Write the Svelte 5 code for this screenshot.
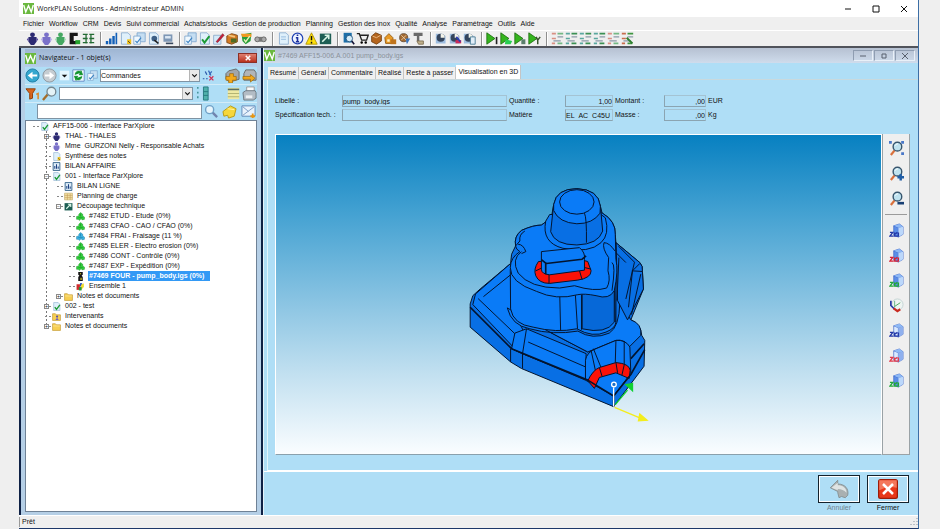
<script>
    const menus = [
        'Fichier', 'Workflow', 'CRM', 'Devis', 'Suivi commercial', 'Achats/stocks',
        'Gestion de production', 'Planning', 'Gestion des inox', 'Qualité', 'Analyse',
        'Paramétrage', 'Outils', 'Aide',
    ];

    const toolGroups = [
        ['people', 'person', 'personGreen', 'machine', 'grid'],
        ['chart', 'docYellow', 'docs', 'docDark', 'screen'],
        ['docs', 'docCheck', 'pencil', 'boxes', 'shield', 'binoculars'],
        ['doc', 'info', 'warning', 'exportTool'],
        ['search', 'cart', 'ball', 'house', 'gear', 'stamp'],
        ['clock', 'clockRed', 'clockDoc'],
        ['play', 'playLeaf', 'playDown', 'playY'],
        ['listA', 'listB', 'listB', 'listB', 'listA', 'listC'],
    ];

    const tabs = ['Résumé', 'Général', 'Commentaire', 'Réalisé', 'Reste à passer', 'Visualisation en 3D'];
    let activeTab = $state('Visualisation en 3D');
    let selected = $state('#7469 FOUR - pump_body.igs (0%)');

    const tree = [
        {
            label: 'AFF15-006 - Interface ParXplore',
            icon: 'docCheck',
            children: [
                { label: 'THAL - THALES', icon: 'people', box: '+' },
                { label: 'Mme  GURZONI Nelly - Responsable Achats', icon: 'person' },
                { label: 'Synthèse des notes', icon: 'docYellow' },
                { label: 'BILAN AFFAIRE', icon: 'report' },
                {
                    label: '001 - Interface ParXplore',
                    icon: 'docCheck',
                    box: '-',
                    children: [
                        { label: 'BILAN LIGNE', icon: 'report' },
                        { label: 'Planning de charge', icon: 'calendar' },
                        {
                            label: 'Découpage technique',
                            icon: 'exportTool',
                            box: '-',
                            children: [
                                { label: '#7482 ETUD - Etude (0%)', icon: 'opGreen' },
                                { label: '#7483 CFAO - CAO / CFAO (0%)', icon: 'opGreen' },
                                { label: '#7484 FRAI - Fraisage (11 %)', icon: 'opBlue' },
                                { label: '#7485 ELER - Electro erosion (0%)', icon: 'opGreen' },
                                { label: '#7486 CONT - Contrôle (0%)', icon: 'opGreen' },
                                { label: '#7487 EXP - Expédition (0%)', icon: 'opGreen' },
                                { label: '#7469 FOUR - pump_body.igs (0%)', icon: 'part' },
                                { label: 'Ensemble 1', icon: 'assembly' },
                            ],
                        },
                        { label: 'Notes et documents', icon: 'folder', box: '+' },
                    ],
                },
                { label: '002 - test', icon: 'docCheck', box: '+' },
                { label: 'Intervenants', icon: 'folderUser' },
                { label: 'Notes et documents', icon: 'folder', box: '+' },
            ],
        },
    ];

    const viewTools = [
        ['zoomFit', 'Ajuster'],
        ['zoomIn', 'Zoom avant'],
        ['zoomOut', 'Zoom arrière'],
        ['cubeBlue', 'Vue de dessus'],
        ['cubeRed', 'Vue de face'],
        ['cubeGreen', 'Vue de droite'],
        ['axes', 'Isométrique'],
        ['cubeBlueOpen', 'Vue de dessous'],
        ['cubeRedOpen', 'Vue arrière'],
        ['cubeGreen', 'Vue de gauche'],
    ];

    // small helpers shared by several icons
    const figure = (c, d) =>
        `<circle cx="8" cy="3.5" r="3" fill="${c}"/><path d="M3 6h10v6l-3 4H6l-3-4z" fill="${c}"/><path d="M1 9l2-2v5zM15 9l-2-2v5z" fill="${d}"/>`;
    const sheet = '<path d="M3 1h8l3 3v11H3z" fill="#dff0fb" stroke="#86a9cc"/>';
    const cube = (c, open) =>
        `<path d="M5 3l6-2 4 3v8l-5 3-5-2z" fill="${open ? '#d9e9ff' : '#5b8ee8'}" stroke="#3b62c4" stroke-width=".7"/><path d="M5 3l5 2v10M10 5l5-1" fill="none" stroke="#3b62c4" stroke-width=".8"/><path d="M5 3l6-2 4 3-5 1z" fill="#8db8f5"/><path d="M10 5l5-1v8l-5 3z" fill="${open ? '#8fb0ee' : '#bcd8fb'}"/><path d="M1 10h3l-3 4h4M6 10v4h3M9 10l-3 2M8 14h2v-4" fill="none" stroke="${c}" stroke-width="1.5"/>`;
    const lens = '<path d="M2 15l4-5" stroke="#d9703c" stroke-width="2.4"/><circle cx="9" cy="6" r="4.6" fill="#bfe2ef" stroke="#38566e" stroke-width="1.5"/><path d="M6.500 5a3 3 0 0 1 3-2" stroke="#fff" fill="none"/>';
    const dial = '<path d="M1 2h8l4 3v9H1z" fill="#9dbde0"/><circle cx="7" cy="7" r="5" fill="#34445c"/><path d="M7 7V2a5 5 0 0 1 5 5z" fill="#f4f4ea"/>';
    const arrow = '<path d="M1 1l10 7-10 7z" fill="#35b51e" stroke="#1c6d10"/>';
    const rows = (a, b) =>
        `<path d="M1 2h5M1 8h5M1 14h4" stroke="${a}" stroke-width="2"/><path d="M8 2h7M8 14h6" stroke="${b}" stroke-width="2"/><path d="M8 6h7M3 11h9" stroke="#8c9aa8" stroke-width="1.500"/>`;
    const leaf = (c, d) =>
        `<path d="M1 13V8l4-1V4l3-3 4 3v3l3 2v4l-4 1-2-2-3 3-2-2z" fill="${c}" stroke="${d}" stroke-width=".8"/><path d="M8 3v5M4 10h8" stroke="${d}"/>`;

    const icons = {
        logo: '<rect width="16" height="16" fill="#6ab83e"/><path d="M1 3l3 10 4-9 4 9 3-10" fill="none" stroke="#fff" stroke-width="2"/>',
        people: figure('#2c2a72', '#55449c'),
        person: figure('#7a71c9', '#b9b1ec'),
        personGreen: figure('#44a862', '#a5dcb5'),
        machine: '<path d="M2 1h10v4H7v6h3v4H2z" fill="#151515"/><path d="M9 10h6v5H9z" fill="#27a32e"/>',
        grid: '<path d="M1 3h6M9 3h6M1 8h6M9 8h6M1 13h6M9 13h6M5 2v12M11 2v12" stroke="#236b33" stroke-width="1.6"/>',
        chart: '<path d="M1 15v-4h3v4zM5 15V8h3v7zM9 15V5h3v10zM13 15V1h2v14z" fill="#1460b8"/>',
        doc: sheet + '<path d="M5 6h6M5 9h6" stroke="#8ab3da"/>',
        docYellow: sheet + '<path d="M10 9h5v6h-5z" fill="#f2c21a"/><path d="M11 11l3 3" stroke="#333"/>',
        docs: '<path d="M5 1h10v11H5z" fill="#c5def2" stroke="#7ba4cc"/><path d="M1 5h8v10H1z" fill="#eff8fe" stroke="#7ba4cc"/><path d="M3 11l2 2 5-6" stroke="#3d83c4" fill="none" stroke-width="1.500"/>',
        docDark: sheet + '<circle cx="9" cy="8" r="3.5" fill="#3d5f86"/><path d="M9 10l5 4" stroke="#222" stroke-width="2"/>',
        screen: '<path d="M3 3h11v9H3z" fill="#7e97b5"/><path d="M5 5h7v3H5z" fill="#dce8f4"/><path d="M6 13h9v2H6z" fill="#38495f"/>',
        docCheck: sheet + '<path d="M5 9l3 4 6-8" fill="none" stroke="#1b9a35" stroke-width="2.4"/>',
        pencil: '<path d="M2 4h9v11H2z" fill="#d5e9f8" stroke="#88a9c9"/><path d="M5 12l8-10 2 2-8 9z" fill="#c51f3a" stroke="#6d1220" stroke-width=".6"/>',
        boxes: '<path d="M1 5l6-3 7 2v8l-7 3-6-2z" fill="#d47b23" stroke="#76400e"/><path d="M6 8h7v5H6z" fill="#4f6b24"/><path d="M3 4l8 2" stroke="#f3c67d" stroke-width="2"/>',
        shield: '<path d="M2 3l12-2-1 10-6 4-4-4z" fill="#279c38"/><path d="M1 2h13v4H3z" fill="#f09a22"/><path d="M5 9l2 3 5-7" stroke="#e7f4b8" fill="none" stroke-width="1.600"/>',
        binoculars: '<circle cx="4" cy="9" r="3" fill="#aaa" stroke="#555"/><circle cx="12" cy="9" r="3" fill="#aaa" stroke="#555"/><path d="M6 6h4v6H6z" fill="#777"/>',
        info: '<circle cx="8" cy="8" r="6.500" fill="#eef4ff" stroke="#2444b4" stroke-width="1.500"/><path d="M8 3v2M6 7h2v5M6 12h4" stroke="#1c2f9c" stroke-width="2" fill="none"/>',
        warning: '<path d="M8 1l7 14H1z" fill="#ffe009" stroke="#a98d00"/><path d="M8 5v5M8 12v2" stroke="#111" stroke-width="1.800"/>',
        exportTool: '<path d="M1 2h14v13H1z" fill="#1d5e54"/><path d="M4 12l8-8M7 4h5v5" stroke="#d9f5e6" fill="none" stroke-width="2"/>',
        search: '<path d="M2 1h10v12H2z" fill="#1d6fa8"/><circle cx="9" cy="8" r="4" fill="#d4ecf8" stroke="#164a77"/><path d="M12 11l3 4" stroke="#113" stroke-width="2"/>',
        cart: '<path d="M1 2h3l3 8h6l2-6H5" fill="none" stroke="#222" stroke-width="1.700"/><circle cx="7" cy="13" r="1.500"/><circle cx="12" cy="13" r="1.500"/>',
        ball: '<path d="M2 5l5-4 7 3v7l-6 4-6-3z" fill="#b5651d" stroke="#6c3a0c"/><path d="M3 5l5 2 5-3" stroke="#f1c691" fill="none"/>',
        house: '<path d="M1 7l5-5 5 5v7H2z" fill="#e89a26" stroke="#8c5207"/><path d="M8 9h7v6H8z" fill="#bf741c"/><path d="M4 9h3v3H4z" fill="#fff0c8"/>',
        gear: '<circle cx="7" cy="7" r="5" fill="#a66b31" stroke="#5b4530"/><path d="M9 8l6 0-4 7z" fill="#3a75bd"/><path d="M4 4l6 6M10 4l-6 6" stroke="#e9d3b3"/>',
        stamp: '<path d="M2 1h11v4H9v6H6V5H2z" fill="#6b6b6b"/><path d="M6 11h8v4H8z" fill="#c0b08c" stroke="#77694a"/>',
        clock: dial,
        clockRed: dial + '<path d="M8 10h7v4H8z" fill="#c82a5a"/><path d="M9 6l5 6" stroke="#2b3bb5" stroke-width="2"/>',
        clockDoc: dial + '<path d="M9 6h6v9H9z" fill="#e1edf7" stroke="#39708b"/>',
        play: arrow + '<path d="M13 6v9" stroke="#222" stroke-width="2"/>',
        playLeaf: arrow + '<path d="M7 9l8 2-2 4H6z" fill="#29ce52"/>',
        playDown: arrow + '<path d="M9 9h5v6H9z" fill="#5b7f6c"/>',
        playY: arrow + '<path d="M10 6l2 4 3-4M12 10v5" stroke="#38532c" stroke-width="1.800" fill="none"/>',
        listA: rows('#d99083', '#74b985'),
        listB: rows('#5aa8a0', '#3c9154'),
        listC: rows('#c96d4e', '#3f9640') + '<path d="M7 7l7 7" stroke="#2f7f2f" stroke-width="2.500"/>',
        back: '<circle cx="8" cy="8" r="7" fill="#35a7cf" stroke="#1f7da3"/><path d="M13 7H8V4L3 8l5 4V9h5z" fill="#fff"/>',
        forward: '<circle cx="8" cy="8" r="7" fill="#c6cdd2" stroke="#8e989f"/><path d="M3 7h5V4l5 4-5 4V9H3z" fill="#fff"/>',
        caret: '<path d="M1 1h14v14H1z" fill="#e4f5fd"/><path d="M4 7h8l-4 4z" fill="#111"/>',
        refresh: '<path d="M1 1h14v14H1z" fill="#eef8ff" stroke="#5a7fc0"/><path d="M4 7a4 4 0 0 1 7-3V2l2 5H9l1-2M12 9a4 4 0 0 1-7 3v2L3 9h4l-1 2" fill="#11932b" stroke="#11932b"/>',
        sort: '<path d="M1 12h2M5 12h2M4 3l2 4" stroke="#2c58a8" stroke-width="1.500"/><path d="M8 2l3 6M12 3l-3 4" stroke="#3465b9" stroke-width="1.500"/><path d="M9 9l5 5M14 9l-5 5" stroke="#cf3156" stroke-width="1.600"/>',
        case: '<path d="M4 3l8-2 3 3v8l-10 3-4-3V6z" fill="#a1a6ab" stroke="#666"/><path d="M1 9h4V6h4v3h3v4H8v3H4v-3H1z" fill="#f2a91b" stroke="#9c6505" stroke-width=".7"/>',
        caseBack: '<path d="M4 2h9l2 3v8H2V6z" fill="#b1b5b8" stroke="#666"/><path d="M1 9h8V7l5 4-5 4v-3H1z" fill="#f2a91b" stroke="#9c6505" stroke-width=".7"/>',
        funnel: '<path d="M1 3h10L8 8v5l-3 1V8z" fill="#d8651e" stroke="#8e3d08"/><path d="M12 9l2-1v6" stroke="#e08724" stroke-width="1.600" fill="none"/>',
        find: '<path d="M1 15l5-6" stroke="#a46d2a" stroke-width="2.500"/><circle cx="10" cy="6" r="4.700" fill="#e4f3f7" stroke="#748790" stroke-width="1.400"/>',
        bars: '<path d="M3 1v14" stroke="#3c8d92" stroke-width="1.500" stroke-dasharray="2 3"/><path d="M9 1h5v14H9z" fill="#4fb2ac" stroke="#267a80"/><path d="M9 6h5M9 10h5" stroke="#267a80"/>',
        list: '<path d="M1 1h14v14H1z" fill="#eee9a2"/><path d="M1 3h14" stroke="#596e62" stroke-width="2"/><path d="M1 8h14M1 12h14" stroke="#a6a767"/>',
        printer: '<path d="M5 1h8v6H5z" fill="#fafafa" stroke="#999"/><path d="M1 7l3-2h10l1 2v6l-3 2H2z" fill="#b3bcc5" stroke="#6d7781"/><path d="M4 10h7v3H4z" fill="#edf0f3"/>',
        eye: '<path d="M9 9l5 5" stroke="#7184ae" stroke-width="2.500"/><circle cx="6" cy="6" r="4.300" fill="#e7f5fc" stroke="#6fa1c7" stroke-width="1.500"/>',
        note: '<path d="M1 8l8-6 6 3-2 8-6 2-1-3-4 1z" fill="#f6d73b" stroke="#b99a12"/><path d="M6 5l7 1" stroke="#fff3a6"/>',
        mail: '<path d="M1 2h14v11H1z" fill="#e8f2fc" stroke="#5d86b7"/><path d="M2 12L14 3M2 3l6 5" stroke="#7b9bc3" fill="none"/><path d="M10 13h5M12.500 10v5" stroke="#e89513" stroke-width="2"/>',
        report: '<path d="M2 1h12v14H2z" fill="#ddecf7" stroke="#275983" stroke-width="1.500"/><path d="M5 12V7M8 12V4M11 12V8" stroke="#1a3f80" stroke-width="1.800"/>',
        calendar: '<path d="M1 2h14v12H1z" fill="#f3dfa0" stroke="#bda566"/><path d="M1 6h14M1 10h14M6 3v11M11 3v11" stroke="#c09a59"/>',
        opGreen: leaf('#33cf3c', '#168b23'),
        opBlue: leaf('#3cb2e2', '#1477a0'),
        part: '<path d="M4 0h8v5l-2 1 2 3v7H4V9l2-3-2-1z" fill="#151515"/><path d="M7 2h2v2H7zM8 10h2v4H8z" fill="#e5d829"/>',
        assembly: '<path d="M1 4h6v10H1z" fill="#d22b2b"/><path d="M7 2h4v6H7z" fill="#2b4fc7"/><path d="M9 5l5-3v7l-6 6z" fill="#f1dc2b"/><path d="M5 9h5v6H5z" fill="#239640"/>',
        folder: '<path d="M1 3h5l2 2h7v10H1z" fill="#f6cf53" stroke="#b98b1f"/><path d="M2 7h12" stroke="#fff1b5"/>',
        folderUser: '<path d="M1 3h5l2 2h7v10H1z" fill="#f6cf53" stroke="#b98b1f"/><circle cx="9" cy="8" r="2" fill="#5a4fa8"/><path d="M6 14l3-4 3 4z" fill="#6f63c7"/>',
        zoomFit: lens + '<path d="M0 0h3v3H0zM13 0h3v3h-3zM13 12h3v3h-3z" fill="#4a78c8"/>',
        zoomIn: lens + '<path d="M9 12h7M12.500 8.500v7" stroke="#1f5da5" stroke-width="2.600"/>',
        zoomOut: lens + '<path d="M9 13h7" stroke="#173f73" stroke-width="2.800"/>',
        cubeBlue: cube('#2338a8'),
        cubeRed: cube('#d62136'),
        cubeGreen: cube('#22a83a'),
        cubeBlueOpen: cube('#2338a8', true),
        cubeRedOpen: cube('#e23a4c', true),
        axes: '<circle cx="9" cy="7" r="6" fill="#eef4f2" stroke="#c3d4d4"/><path d="M6 10V3" stroke="#67b58a" stroke-width="1"/><path d="M2 3v5l4 4" stroke="#2637a5" stroke-width="1.800" fill="none"/><path d="M5 11l4 3 3-2" stroke="#c92a20" stroke-width="2.400" fill="none"/><path d="M6 9l6-4" stroke="#47aa5b"/>',
        undo: '<path d="M1 7l6-6v3c6 0 9 4 8 9l-2 2-3-1-2 1-1-4v-1z" fill="#a9b0b1" stroke="#7d8587" stroke-width=".6"/><path d="M2 7l5-4v2c4 0 7 2 7 6-2-2-4-3-7-3v1z" fill="#dfe4e4"/>',
        close: '<rect x=".5" y=".5" width="15" height="15" rx="1.500" fill="#e8381a" stroke="#9c1c08"/><path d="M1 1h14v6Q8 5 1 9z" fill="#f4775b"/><path d="M4 4l8 8M12 4l-8 8" stroke="#fff" stroke-width="2"/>',
    };
</script>

{#snippet icon(name, size = 'small')}
    <svg class="icon {size}" viewBox="0 0 16 16" aria-hidden="true">{@html icons[name]}</svg>
{/snippet}

{#snippet branch(nodes, depth)}
    <ul class="branch" class:root={depth === 0} class:guided={depth === 1}>
        {#each nodes as node}
            <li>
                <button class="node" class:selected={selected === node.label} onclick={() => (selected = node.label)}>
                    <span class="stub">
                        {#if node.box}<span class="box">{node.box === '+' ? '+' : '−'}</span>{/if}
                    </span>
                    {@render icon(node.icon, 'tiny')}
                    <span class="label">{node.label}</span>
                </button>
                {#if node.children}
                    {@render branch(node.children, depth + 1)}
                {/if}
            </li>
        {/each}
    </ul>
{/snippet}

<div class="window">
    <header class="titlebar">
        {@render icon('logo')}
        <h1>WorkPLAN Solutions - Administrateur ADMIN</h1>
        <div class="window-buttons">
            <button aria-label="Réduire"><svg viewBox="0 0 8 8"><path d="M1 4h6" /></svg></button>
            <button aria-label="Agrandir"><svg viewBox="0 0 8 8"><path d="M1 1h6v6H1z" /></svg></button>
            <button aria-label="Fermer la fenêtre"><svg viewBox="0 0 8 8"><path d="M1 1l6 6M7 1l-6 6" /></svg></button>
        </div>
    </header>

    <nav class="menubar">
        {#each menus as menu}
            <button>{menu}</button>
        {/each}
    </nav>

    <div class="toolbar">
        {#each toolGroups as group}
            <div class="tool-group">
                {#each group as tool}
                    <button aria-label={tool}>{@render icon(tool, 'medium')}</button>
                {/each}
            </div>
        {/each}
    </div>

    <main class="workspace">
        <aside class="navigator">
            <div class="nav-title">
                {@render icon('logo')}
                <h2>Navigateur - 1 objet(s)</h2>
                <button class="nav-close" aria-label="Fermer le navigateur">
                    <svg viewBox="0 0 8 8"><path d="M1 1l6 6M7 1l-6 6" /></svg>
                </button>
            </div>

            <div class="nav-row">
                <button aria-label="Précédent">{@render icon('back', 'big')}</button>
                <button aria-label="Suivant">{@render icon('forward', 'big')}</button>
                <button aria-label="Historique">{@render icon('caret')}</button>
                <button aria-label="Actualiser">{@render icon('refresh', 'medium')}</button>
                {@render icon('docs')}
                <span class="combo order">
                    <select aria-label="Type d'objet">
                        <option>Commandes</option>
                    </select>
                    <svg viewBox="0 0 8 8"><path d="M2 3l2 2 2-2" /></svg>
                </span>
                <button aria-label="Trier">{@render icon('sort', 'medium')}</button>
                <span class="push"></span>
                <button aria-label="Ajouter">{@render icon('case', 'big')}</button>
                <button aria-label="Envoyer">{@render icon('caseBack', 'big')}</button>
            </div>

            <div class="nav-row">
                <button aria-label="Filtrer">{@render icon('funnel', 'big')}</button>
                <button aria-label="Rechercher">{@render icon('find', 'big')}</button>
                <span class="combo filter">
                    <select aria-label="Filtre"><option></option></select>
                    <svg viewBox="0 0 8 8"><path d="M2 3l2 2 2-2" /></svg>
                </span>
                <button aria-label="Colonnes">{@render icon('bars', 'big')}</button>
                <span class="push"></span>
                <button aria-label="Liste">{@render icon('list', 'medium')}</button>
                <button aria-label="Imprimer">{@render icon('printer', 'big')}</button>
            </div>

            <div class="nav-row last">
                <input class="quick" type="text" aria-label="Recherche rapide" />
                <button aria-label="Lancer la recherche">{@render icon('eye', 'big')}</button>
                <button aria-label="Note">{@render icon('note', 'wide')}</button>
                <button aria-label="Message">{@render icon('mail', 'wide')}</button>
            </div>

            <div class="tree">
                {@render branch(tree, 0)}
            </div>
        </aside>

        <section class="document">
            <div class="child-title">
                {@render icon('logo')}
                <h2>#7469 AFF15-006.A.001 pump_body.igs</h2>
                <div class="child-buttons">
                    <button aria-label="Réduire le document"><svg viewBox="0 0 8 8"><path d="M1 4h6" /></svg></button>
                    <button aria-label="Agrandir le document"><svg viewBox="0 0 8 8"><path d="M2 2h4v4H2z" /></svg></button>
                    <button aria-label="Fermer le document"><svg viewBox="0 0 8 8"><path d="M1 1l6 6M7 1l-6 6" /></svg></button>
                </div>
            </div>

            <div class="tabs" role="tablist">
                {#each tabs as tab}
                    <button role="tab" aria-selected={activeTab === tab} class:active={activeTab === tab} onclick={() => (activeTab = tab)}>
                        {tab}
                    </button>
                {/each}
            </div>

            <div class="panel">
                <form class="fields">
                    <label for="libelle">Libellé :</label>
                    <input id="libelle" value="pump_body.igs" />
                    <label for="quantite">Quantité :</label>
                    <input id="quantite" class="number" value="1,00" />
                    <label for="montant">Montant :</label>
                    <input id="montant" class="number" value=",00" />
                    <span>EUR</span>
                    <label for="spec">Spécification tech. :</label>
                    <input id="spec" value="" />
                    <label for="matiere">Matière</label>
                    <input id="matiere" value="EL_AC_C45U" />
                    <label for="masse">Masse :</label>
                    <input id="masse" class="number" value=",00" />
                    <span>Kg</span>
                </form>

                <div class="viewer">
                    <div class="scene">
                        <svg viewBox="-525 -120 1824 960" role="img" aria-label="pump_body.igs">
                            <g class="solid">
                                <path class="side" d="M68 365L90 345L182 268L185 240L197 215Q192 185 215 168Q250 152 275 152L305 130L312 90Q320 42 382 42Q448 44 453 95L458 115Q500 140 498 180L500 205L572 265Q582 275 580 292L583 345L545 438Q575 450 578 485L587 500L585 578L493 700L215 585L182 565L60 460L60 390Z" />
                                <path d="M76 360L182 268L182 400L215 460L225 480L190 520L68 392Z" />
                                <path class="edge" d="M100 368L182 302M84 374L195 480M60 400L185 525L218 540L415 620M182 525V565M218 540V585" />
                                <path d="M195 478L230 465L410 540L408 620L218 540L185 525Z" />
                                <path class="edge" d="M235 505L408 580M300 475L415 535L500 498M230 465L218 540" />
                                <path d="M172 402Q185 455 240 465Q310 485 385 472Q430 500 480 478Q510 460 512 385L545 438Q580 450 575 485L540 520Q525 495 500 500L415 535L300 475Z" />
                                <path class="side" d="M500 205L572 265Q582 275 580 292L583 345L535 438L505 380Z" />
                                <path class="edge" d="M508 216L556 264L530 375M572 268L550 290L538 400M509 250L503 380M548 290L580 292M575 300L547 422M500 235L530 265" />
                                <path d="M181 285L182 405Q190 452 250 460Q320 478 382 465Q430 493 470 475Q498 464 500 445L500 205Z" />
                                <path class="shade" d="M398 350H495V445Q470 482 398 465Z" />
                                <path class="edge" d="M330 345L333 470M376 336L384 465M396 350V468M495 270L498 445" />
                                <path d="M197 215Q192 185 215 168Q250 152 275 152L305 130L458 115Q500 140 498 180L500 255Q508 290 495 350Q480 378 440 365Q405 358 385 362Q320 380 260 352Q180 325 181 280Q182 250 210 232Q198 225 197 215Z" />
                                <path class="edge" d="M215 232Q183 255 205 297Q240 342 330 342L375 335Q435 354 472 342Q485 320 476 290L478 250Q458 222 464 205Q480 205 497 230M205 210Q220 210 228 232L215 238M197 215L210 200Q207 180 225 170M488 265Q500 270 488 350" />
                                <path d="M288 140Q275 205 340 222Q420 238 455 205Q482 180 468 130L455 120H300Z" />
                                <path class="side" d="M312 90L303 172Q315 212 382 212Q447 210 460 170L453 92Z" />
                                <path d="M312 90Q320 42 382 42Q448 44 453 95L452 116Q430 148 382 148Q328 145 312 108Z" />
                                <ellipse cx="382" cy="82" rx="52" ry="37" />
                                <path class="edge" d="M405 116Q412 130 411 205" />
                                <path class="red" d="M266 262Q250 285 258 305Q268 328 300 328L385 318Q425 312 425 290L415 262L390 255Z" />
                                <path class="edge" d="M298 300V328M390 290L398 317M258 290L275 282M405 280L425 285" />
                                <path d="M275 232L390 220Q408 235 405 255L405 288L300 302Q275 300 275 285Z" />
                                <path class="edge thick" d="M275 256L290 268L398 255L410 245M288 264V300" />
                                <path d="M408 620L408 560Q412 535 440 525L500 500Q530 498 542 520L545 600L493 668Z" />
                                <path class="edge" d="M425 530L440 600M500 500L498 567M525 502V575M432 525L455 582" />
                                <path class="red" d="M415 622Q430 590 450 582L500 567Q540 570 543 590L540 615L500 598L450 612L435 645Z" />
                                <path class="edge" d="M450 582L458 608M500 567L505 598M525 574L518 605" />
                                <path class="edge thick" d="M60 400L185 525L415 620L493 668V700M493 668L545 603L587 528M545 555L585 510" />
                            </g>
                            <g class="axis">
                                <path class="up" d="M493 700V642" />
                                <circle cx="494" cy="633" r="7" />
                                <path class="green" d="M498 694L535 650M530 634L550 630V652Z" />
                                <path class="yellow" d="M496 702L572 734M572 722L594 741L568 743Z" />
                            </g>
                        </svg>
                    </div>
                    <div class="view-tools">
                        {#each viewTools as [name, label], i}
                            {#if i === 3}<hr />{/if}
                            <button aria-label={label}>{@render icon(name, 'big')}</button>
                        {/each}
                    </div>
                </div>
            </div>

            <footer class="actions">
                <div class="action disabled">
                    <button id="annuler" disabled aria-labelledby="annuler-label">{@render icon('undo', 'large')}</button>
                    <label id="annuler-label" for="annuler">Annuler</label>
                </div>
                <div class="action">
                    <button id="fermer" aria-labelledby="fermer-label">{@render icon('close', 'large')}</button>
                    <label id="fermer-label" for="fermer">Fermer</label>
                </div>
            </footer>
        </section>
    </main>

    <div class="statusbar">
        <span>Prêt</span>
        <svg viewBox="0 0 8 8"><path d="M7 0v1M7 3v1M4 3v1M7 6v1M4 6v1M1 6v1" /></svg>
    </div>
</div>

<style>
    :global(body) {
        background: #efefef;
    }

    .window {
        display: flex;
        flex-direction: column;
        box-sizing: border-box;
        min-height: 100vh;
        margin: 0 21px 0 19px;
        border-right: 1px solid #3c6ea5;
        border-bottom: 1px solid #1d3769;
        background: #efefef;
        color: #111;
        font: 7px/10px "Liberation Sans", Arial, sans-serif;
    }

    button,
    input,
    select {
        margin: 0;
        padding: 0;
        border: 0;
        background: none;
        color: inherit;
        font: inherit;
    }

    button {
        display: flex;
        align-items: center;
        justify-content: center;
    }

    h1,
    h2 {
        margin: 0;
        font: 7px/10px "Open Sans", "Segoe UI", sans-serif;
        white-space: nowrap;
    }

    .icon {
        display: block;
        flex: none;
        width: 11px;
        height: 11px;
    }

    .icon.tiny {
        width: 9px;
        height: 9px;
    }

    .icon.medium {
        width: 13px;
        height: 13px;
    }

    .icon.big {
        width: 15px;
        height: 15px;
    }

    .icon.wide {
        width: 17px;
        height: 15px;
    }

    .icon.large {
        width: 20px;
        height: 20px;
    }

    .titlebar {
        display: flex;
        align-items: center;
        gap: 3px;
        height: 17px;
        padding-left: 4px;
        background: #fff;
    }

    .window-buttons {
        display: flex;
        margin-left: auto;
    }

    .window-buttons button {
        width: 28px;
        height: 16px;
    }

    .window-buttons svg,
    .child-buttons svg,
    .nav-close svg,
    .combo svg {
        width: 8px;
        height: 8px;
        fill: none;
        stroke: #111;
    }

    .menubar {
        display: flex;
        gap: 5px;
        height: 13px;
        padding-left: 4px;
        border-bottom: 1px solid #fff;
    }

    .toolbar {
        display: flex;
        align-items: center;
        height: 15px;
        padding-left: 6px;
        border-bottom: 2px solid #50535b;
    }

    .tool-group {
        display: flex;
    }

    .tool-group + .tool-group::before {
        content: '';
        width: 1px;
        height: 14px;
        margin: 0 2px 0 5px;
        border-right: 1px solid #fff;
        background: #8e8e8e;
    }

    .tool-group button {
        width: 14px;
        height: 14px;
    }

    .workspace {
        display: flex;
        flex: 1;
        background: #afdef6;
    }

    .navigator {
        display: flex;
        flex-direction: column;
        box-sizing: border-box;
        width: 244px;
        padding: 1px 4px 3px;
        border: solid #0e2145;
        border-width: 0 2px 0 2px;
        background: #b5cfe6;
    }

    .nav-title {
        display: flex;
        align-items: center;
        gap: 3px;
        height: 18px;
        background: linear-gradient(#9fb6d3, #b6cdeb);
    }

    .nav-close {
        width: 19px;
        height: 10px;
        margin-left: auto;
        border: 1px solid #8c2f26;
        background: linear-gradient(#df8070, #b9301d);
    }

    .nav-close svg {
        width: 6px;
        height: 6px;
        stroke: #fff;
        stroke-width: 2;
    }

    .nav-row {
        display: flex;
        align-items: center;
        gap: 2px;
        height: 17px;
        border-bottom: 1px solid #d3ecf8;
        background: #afdef6;
    }

    .nav-row.last {
        border-bottom: 0;
    }

    .push {
        flex: 1;
    }

    .combo {
        display: flex;
        align-items: center;
        box-sizing: border-box;
        height: 13px;
        border: 1px solid #7f93a3;
        background: #fff;
    }

    .combo select {
        flex: 1;
        min-width: 0;
        height: 11px;
        appearance: none;
    }

    .combo svg {
        height: 11px;
        width: 9px;
        border-left: 1px solid #b5b5b5;
        background: #e9e9e9;
    }

    .order {
        width: 100px;
    }

    .filter {
        width: 134px;
    }

    .quick {
        box-sizing: border-box;
        flex: 1;
        min-width: 0;
        height: 15px;
        margin-left: 12px;
        border: 1px solid #7f93a3;
        background: #fff;
    }

    .tree {
        flex: 1;
        overflow: hidden;
        border: 1px solid #6f8296;
        background: #fff;
    }

    .branch {
        margin: 0 0 0 12px;
        padding: 0;
        list-style: none;
    }

    .branch.root {
        margin-left: 6px;
    }

    .branch.guided {
        background: repeating-linear-gradient(#777 0 2px, transparent 2px 4px) 2px 0 / 1px 100% no-repeat;
    }

    .node {
        height: 10px;
        white-space: nowrap;
    }

    .stub {
        display: flex;
        align-items: center;
        width: 8px;
        height: 10px;
        background: linear-gradient(90deg, #888 60%, transparent 60%) 1px 5px / 4px 1px repeat-x;
    }

    .box {
        box-sizing: border-box;
        width: 5px;
        height: 5px;
        border: 1px solid #8a8a8a;
        background: #fff;
        font-size: 5px;
        line-height: 3px;
    }

    .label {
        margin-left: 3px;
        padding: 0 1px;
        white-space: pre;
    }

    .selected .label {
        padding-right: 6px;
        background: #3399f5;
        color: #fff;
        font-weight: bold;
    }

    .document {
        display: flex;
        flex-direction: column;
        flex: 1;
        min-width: 0;
        border-left: 1px solid #e6f3fa;
    }

    .child-title {
        display: flex;
        align-items: center;
        gap: 3px;
        height: 15px;
        background: linear-gradient(#b6c1d2, #cfdcec);
        color: #8b929b;
    }

    .child-title h2 {
        font-family: "Liberation Sans", Arial, sans-serif;
    }

    .child-buttons {
        display: flex;
        gap: 1px;
        margin: 0 3px 0 auto;
    }

    .child-buttons button {
        box-sizing: border-box;
        width: 20px;
        height: 11px;
        border: 1px solid #8f9db1;
        border-right-color: #e9f0f8;
        border-bottom-color: #e9f0f8;
    }

    .child-buttons svg {
        stroke: #59616e;
    }

    .tabs {
        display: flex;
        align-items: flex-end;
        height: 16px;
        padding-left: 4px;
        border-bottom: 1px solid #c9d9dd;
    }

    .tabs button {
        height: 12px;
        padding: 0 2px;
        border-right: 1px solid #c5c5c5;
        background: #f0f0f0;
    }

    .tabs button.active {
        height: 14px;
        background: #fff;
    }

    .panel {
        display: flex;
        flex: 1;
        flex-direction: column;
        margin-left: 3px;
        padding: 15px 8px 15px 7px;
        border-left: 1px solid #e3f4fc;
        border-bottom: 1px solid #fff;
    }

    .fields {
        display: grid;
        grid-template-columns: 65px 165px 54px 48px 47px 42px auto;
        gap: 2px;
        align-items: center;
        justify-content: start;
        margin-bottom: 13px;
        white-space: nowrap;
    }

    .fields input {
        box-sizing: border-box;
        width: 100%;
        height: 12px;
        border: 1px solid #a4c3d3;
        border-left-color: #8ba4b1;
        border-bottom-color: #8ba4b1;
    }

    .fields .number {
        text-align: right;
    }

    .viewer {
        display: flex;
        flex: 1;
    }

    .scene {
        display: flex;
        flex: 1;
        border: solid #fff;
        border-width: 1px 1px 0 1px;
        border-bottom: 1px solid #8aa0ac;
        background: linear-gradient(#0780c1, #45a2d2 25%, #84c1e1 50%, #c2e0f0 75%, #fafdff);
    }

    .scene svg {
        flex: 1;
        min-width: 0;
        height: 318px;
    }

    .solid {
        fill: #0a7bf7;
        stroke: #03142e;
        stroke-width: 3;
        stroke-linejoin: round;
    }

    .solid .edge {
        fill: none;
    }

    .solid .side {
        fill: #086fe4;
    }

    .solid .shade {
        fill: #0668d8;
    }

    .solid .red {
        fill: #fb1208;
    }

    .solid .thick {
        stroke-width: 5;
    }

    .axis {
        fill: none;
        stroke-width: 4;
    }

    .axis .up {
        stroke: #fff;
    }

    .axis circle {
        fill: #1d6fc6;
        stroke: #fff;
    }

    .axis .green {
        fill: #10d132;
        stroke: #10d132;
    }

    .axis .yellow {
        fill: #f3ed1e;
        stroke: #f3ed1e;
    }

    .view-tools {
        display: flex;
        flex-direction: column;
        align-items: center;
        gap: 10px;
        box-sizing: border-box;
        width: 28px;
        padding-top: 7px;
        border: solid #9aa2a6;
        border-width: 0 1px 1px 1px;
        background: #efefef;
    }

    .view-tools hr {
        box-sizing: border-box;
        width: 22px;
        height: 1px;
        margin: -2px 0;
        border: 0;
        background: #9b9b9b;
    }

    .actions {
        display: flex;
        justify-content: flex-end;
        gap: 7px;
        padding: 3px 9px 2px;
        border-top: 1px solid #fff;
    }

    .action {
        display: flex;
        flex-direction: column;
        align-items: center;
    }

    .action button {
        box-sizing: border-box;
        width: 42px;
        height: 28px;
        border: 1px solid #14222c;
        box-shadow: inset 0 0 0 1px #fff;
    }

    .action.disabled {
        color: #71838c;
    }

    .statusbar {
        display: flex;
        align-items: center;
        justify-content: space-between;
        height: 12px;
        border-top: 1px solid #fff;
    }

    .statusbar span {
        padding-left: 2px;
        border-left: 1px solid #999;
    }

    .statusbar svg {
        width: 8px;
        height: 8px;
        stroke: #8a94a0;
    }
</style>
